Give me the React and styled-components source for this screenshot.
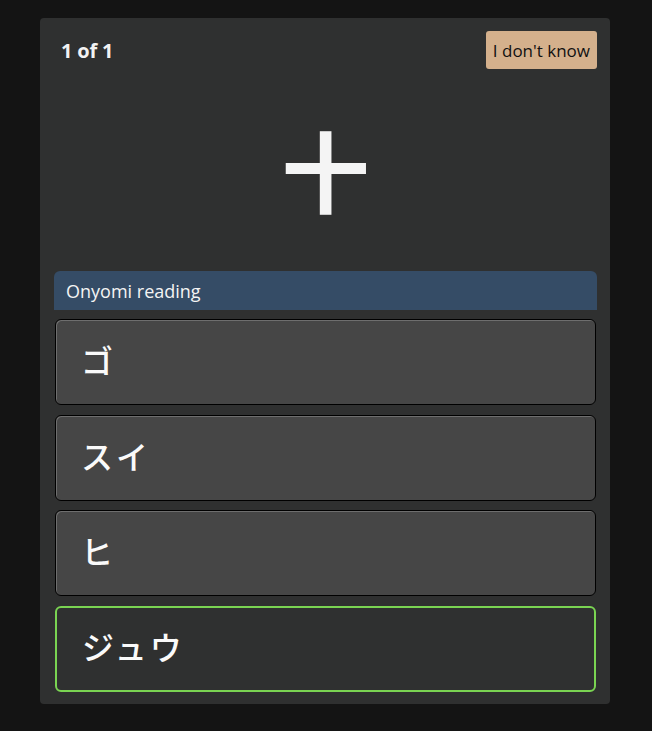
import React, { useState } from "react"
import styled, { createGlobalStyle } from "styled-components"

const options = ["ゴ", "スイ", "ヒ", "ジュウ"]

const GlobalStyle = createGlobalStyle`
  html, body {
    margin: 0;
    background: #141414;
  }
  body {
    font-family: "Open Sans", "Noto Sans CJK JP", sans-serif;
  }
`

const App = () => {
  const [selected, setSelected] = useState(3)

  return (
    <>
      <GlobalStyle />
      <Page>
        <Card>
          <Header>
            <Counter>1 of 1</Counter>
            <SkipButton>I don't know</SkipButton>
          </Header>
          <Kanji>十</Kanji>
          <Prompt>Onyomi reading</Prompt>
          <Options>
            {options.map((el, index) => (
              <Option key={el} isActive={selected === index} onClick={() => setSelected(index)}>
                {el}
              </Option>
            ))}
          </Options>
        </Card>
      </Page>
    </>
  )
}

const Page = styled.div`
  display: flex;
  align-items: flex-start;
  padding: 18px 0 0 40px;
  min-height: 731px;
  box-sizing: border-box;
`

const Card = styled.div`
  width: 570px;
  box-sizing: border-box;
  padding: 13px 13px 12px 14px;
  background: #2f3030;
  border-radius: 4px;
  display: flex;
  flex-direction: column;
`

const Header = styled.div`
  display: flex;
  justify-content: space-between;
  align-items: center;
  padding-left: 7px;
  height: 38px;
`

const Counter = styled.span`
  color: #f2f2f2;
  font-size: 20px;
  font-weight: 700;
  letter-spacing: -0.2px;
`

const SkipButton = styled.button`
  height: 38px;
  padding: 0 7px;
  background: #d4b08c;
  color: #111;
  border: none;
  border-radius: 3px;
  font-family: "Open Sans", sans-serif;
  font-size: 17px;
  cursor: pointer;
`

const Kanji = styled.div`
  height: 202px;
  display: flex;
  justify-content: center;
  align-items: center;
  padding-bottom: 4px;
  box-sizing: border-box;
  color: #f4f4f4;
  font-family: "Noto Sans CJK JP", sans-serif;
  font-weight: 700;
  font-size: 88px;
  line-height: 1;
`

const Prompt = styled.div`
  height: 39px;
  display: flex;
  align-items: center;
  padding-left: 12px;
  background: #354c66;
  border-radius: 6px 6px 0 0;
  color: #f4f4f4;
  font-size: 18px;
`

const Options = styled.div`
  display: flex;
  flex-direction: column;
  gap: 9.7px;
  padding: 9px 1px 0;
`

const Option = styled.button`
  height: 86px;
  box-sizing: border-box;
  display: flex;
  align-items: center;
  padding: 0 0 6px 25px;
  background: ${(props) => (props.isActive ? "#2f3030" : "#464646")};
  border: ${(props) => (props.isActive ? "2px solid #7ad452" : "1px solid #000")};
  box-shadow: ${(props) => (props.isActive ? "none" : "inset 1px 1px 0 #6e6e6e")};
  border-radius: 6px;
  color: #fafafa;
  font-family: "Noto Sans CJK JP", sans-serif;
  font-weight: 500;
  font-size: 32px;
  letter-spacing: 3px;
  cursor: pointer;
  text-align: left;
`

export default App
